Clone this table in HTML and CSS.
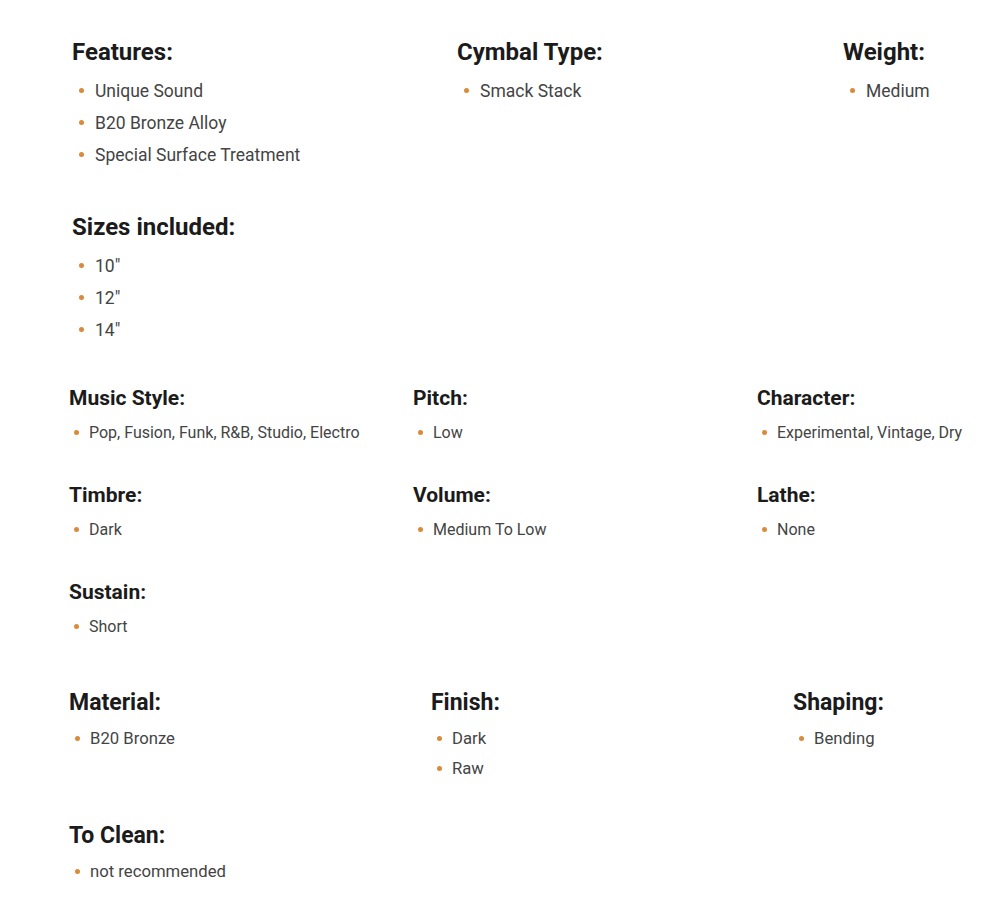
FILE: index.html
```html
<!DOCTYPE html>
<html lang="en">
<head>
<meta charset="utf-8">
<title>Specifications</title>
<link rel="stylesheet" href="styles.css">
</head>
<body>
<div class="page">
  <section class="specs specs-lg">
    <div class="grid grid-lg">
      <div class="block">
        <h3>Features:</h3>
        <ul><li>Unique Sound</li><li>B20 Bronze Alloy</li><li>Special Surface Treatment</li></ul>
      </div>
      <div class="block">
        <h3>Cymbal Type:</h3>
        <ul><li>Smack Stack</li></ul>
      </div>
      <div class="block">
        <h3>Weight:</h3>
        <ul><li>Medium</li></ul>
      </div>
      <div class="block">
        <h3>Sizes included:</h3>
        <ul><li>10″</li><li>12″</li><li>14″</li></ul>
      </div>
    </div>
  </section>

  <section class="specs specs-sm">
    <div class="grid grid-sm">
      <div class="block"><h3>Music Style:</h3><ul><li>Pop, Fusion, Funk, R&amp;B, Studio, Electro</li></ul></div>
      <div class="block"><h3>Pitch:</h3><ul><li>Low</li></ul></div>
      <div class="block"><h3>Character:</h3><ul><li>Experimental, Vintage, Dry</li></ul></div>
      <div class="block"><h3>Timbre:</h3><ul><li>Dark</li></ul></div>
      <div class="block"><h3>Volume:</h3><ul><li>Medium To Low</li></ul></div>
      <div class="block"><h3>Lathe:</h3><ul><li>None</li></ul></div>
      <div class="block"><h3>Sustain:</h3><ul><li>Short</li></ul></div>
    </div>
  </section>

  <section class="specs specs-md">
    <div class="grid grid-md">
      <div class="block"><h3>Material:</h3><ul><li>B20 Bronze</li></ul></div>
      <div class="block"><h3>Finish:</h3><ul><li>Dark</li><li>Raw</li></ul></div>
      <div class="block"><h3>Shaping:</h3><ul><li>Bending</li></ul></div>
      <div class="block"><h3>To Clean:</h3><ul><li>not recommended</li></ul></div>
    </div>
  </section>
</div>
</body>
</html>
```

FILE: styles.css
```css
* { box-sizing: border-box; }
html, body { margin: 0; padding: 0; background: #ffffff; }
body {
  font-family: Roboto, "Liberation Sans", sans-serif;
  color: #444444;
}
.page { width: 1000px; }
h3 { margin: 0; color: #1b1b1b; font-weight: 700; white-space: nowrap; }
ul { list-style: none; margin: 0; padding: 0; }
li { position: relative; white-space: nowrap; }
li::before {
  content: "";
  position: absolute;
  width: 5px;
  height: 5px;
  border-radius: 50%;
  background: #d98b3a;
  top: 50%;
  margin-top: -3px;
}
.grid { display: grid; }

/* section 1 */
.specs-lg { padding: 37px 0 0 72px; }
.grid-lg { grid-template-columns: 385px 386px 150px; row-gap: 41px; }
.specs-lg h3 { font-size: 24px; line-height: 30px; margin-bottom: 8px; }
.specs-lg li { font-size: 17.5px; line-height: 32px; padding-left: 23px; }
.specs-lg li::before { left: 7px; }

/* section 2 */
.specs-sm { padding: 39px 0 0 69px; }
.grid-sm { grid-template-columns: 344px 344px 243px; row-gap: 37px; }
.specs-sm h3 { font-size: 21px; line-height: 26px; margin-bottom: 10px; }
.specs-sm li { font-size: 16px; line-height: 24px; padding-left: 20px; }
.specs-sm li::before { left: 5px; }

/* section 3 */
.specs-md { padding: 50px 0 40px 69px; }
.grid-md { grid-template-columns: 362px 362px 200px; row-gap: 38px; }
.specs-md h3 { font-size: 23px; line-height: 28px; margin-bottom: 7px; }
.specs-md li { font-size: 16.7px; line-height: 30px; padding-left: 21px; }
.specs-md li::before { left: 6px; }
```
